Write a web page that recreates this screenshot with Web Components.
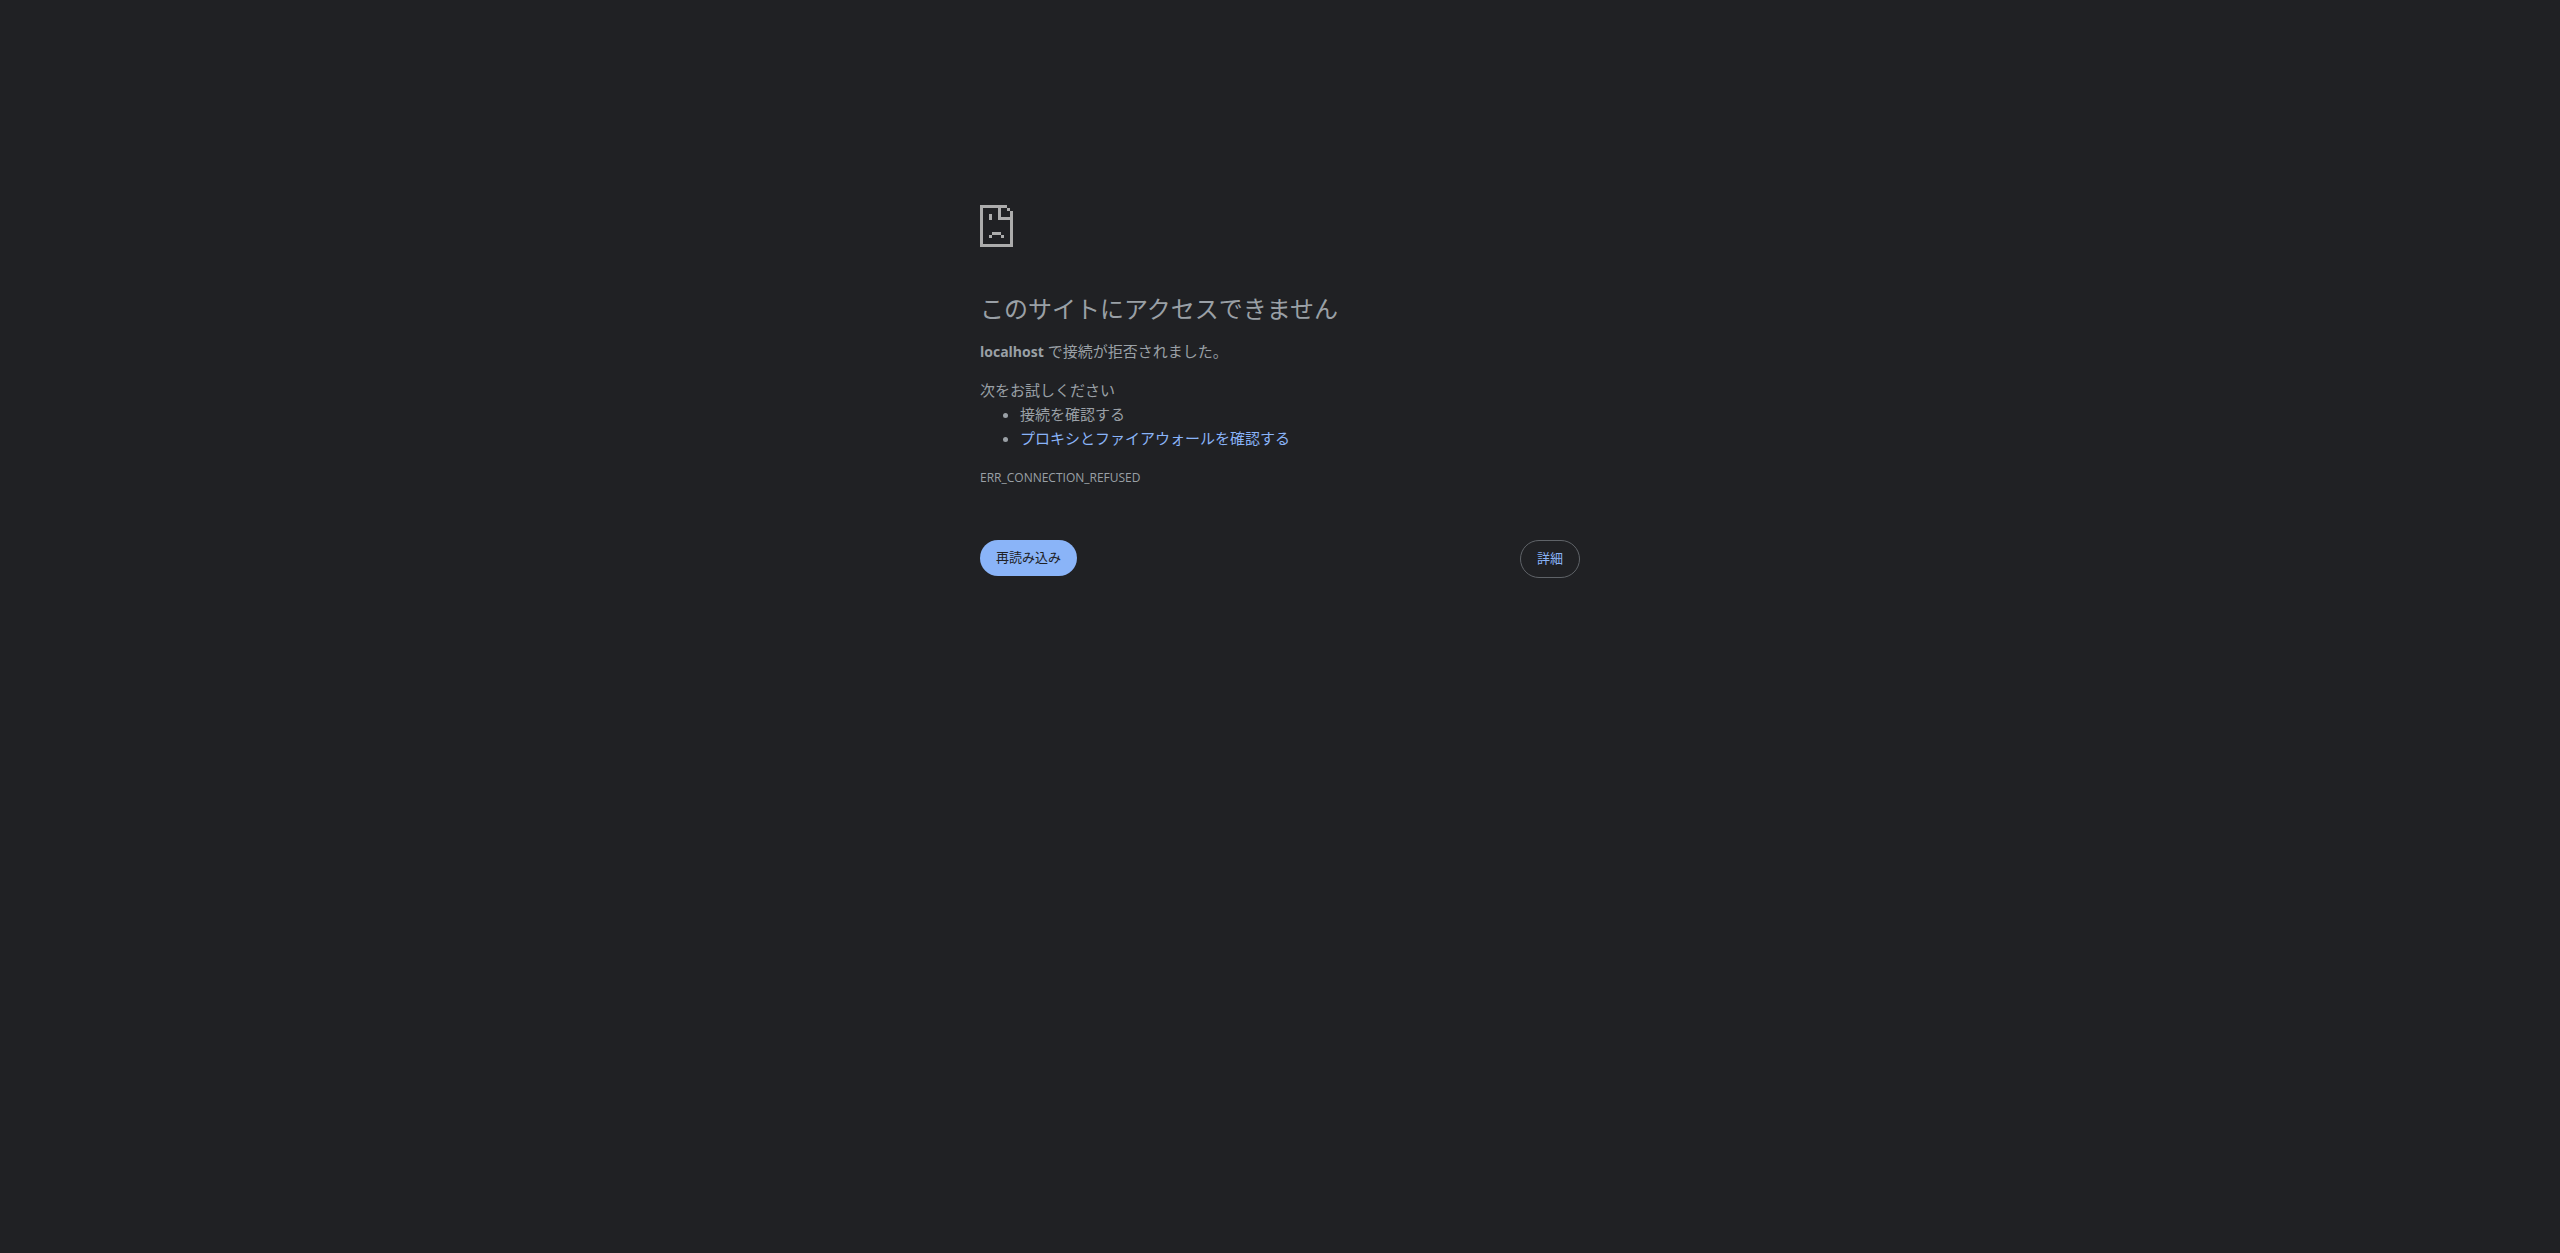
<!DOCTYPE html>
<html lang="ja">
<head>
<meta charset="utf-8">
<title>localhost</title>
<style>
body { margin: 0; background: #202124; color: #9aa0a6; font-family: "Open Sans", "Noto Sans CJK JP", sans-serif; font-size: 15px; line-height: 24px; }
</style>
</head>
<body>
<error-page></error-page>
<script>
const define = (name, html) => customElements.define(name, class extends HTMLElement {
  constructor() {
    super();
    this.attachShadow({ mode: 'open' }).innerHTML = html;
  }
});

define('sad-page-icon', `
<style>:host { display: block; height: 72px; } svg { display: block; }</style>
<svg width="33" height="42" viewBox="0 0 11 14" fill="#acacac" shape-rendering="crispEdges" aria-hidden="true">
<path d="M0 0H9V1H7V4H11V14H0ZM1 1V13H10V5H6V1ZM9 1H10V2H9ZM10 2H11V4H10ZM3 3H4V5H3ZM4 9H7V10H4ZM3 10H4V11H3ZM7 10H8V11H7Z" fill-rule="evenodd"/>
</svg>`);

define('error-message', `
<style>
:host { display: block; }
h1 { margin: 0 0 14px; font-size: 24px; font-weight: 400; line-height: 32px; }
p { margin: 0; }
strong { font-size: 14px; line-height: 16px; }
ul { margin: 0; padding: 0 0 0 40px; }
.summary { margin-bottom: 15px; }
.code { margin-top: 16px; font-size: 12px; line-height: 24px; }
a { color: #8ab4f8; text-decoration: none; }
</style>
<h1>このサイトにアクセスできません</h1>
<p class="summary"><strong>localhost</strong> で接続が拒否されました。</p>
<p>次をお試しください</p>
<ul><li>接続を確認する</li><li><a href="#buttons">プロキシとファイアウォールを確認する</a></li></ul>
<p class="code">ERR_CONNECTION_REFUSED</p>`);

define('pill-button', `
<style>
:host { display: block; }
button { display: block; box-sizing: border-box; margin: 0; padding: 7px 16px 9px; border: 0; border-radius: 20px; background: #8ab4f8; color: #202124; font-family: inherit; font-size: 13px; line-height: 20px; cursor: pointer; }
:host([outlined]) button { border: 1px solid #5f6368; background: none; color: #8ab4f8; }
</style>
<button type="button"><slot></slot></button>`);

define('error-page', `
<style>
:host { display: block; box-sizing: border-box; max-width: 600px; margin: 0 auto; padding-top: 205px; }
error-message { margin-top: 16px; }
.buttons { display: flex; justify-content: space-between; align-items: flex-start; margin-top: 50px; }
</style>
<sad-page-icon></sad-page-icon>
<error-message></error-message>
<div class="buttons" id="buttons">
<pill-button>再読み込み</pill-button>
<pill-button outlined>詳細</pill-button>
</div>`);
</script>
</body>
</html>
